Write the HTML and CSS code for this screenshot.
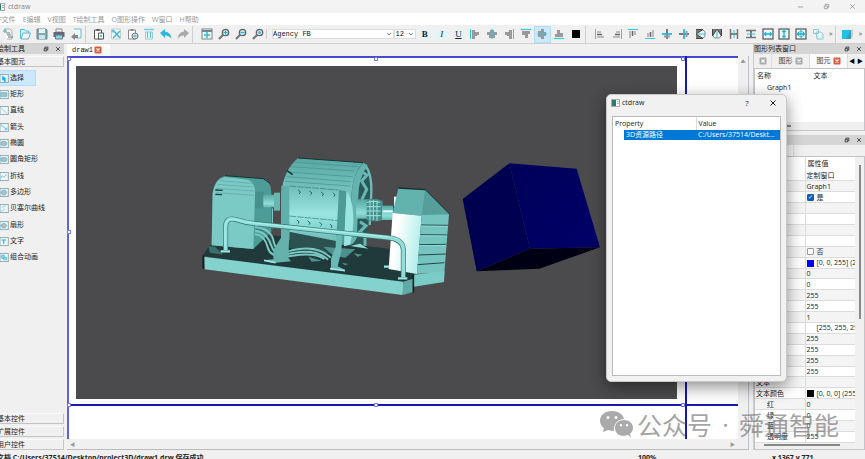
FILE: index.html
```html
<!DOCTYPE html>
<html>
<head>
<meta charset="utf-8">
<title>ctdraw</title>
<link rel="stylesheet" href="styles.css">
</head>
<body>
<svg class="defs" aria-hidden="true">
  <symbol id="float" viewBox="0 0 8 8"><path d="M2.5 3V1.5h4v3.500H5M1.500 3.500h3.500v3h-3.500z" fill="none" stroke="currentColor"/></symbol>
  <symbol id="close" viewBox="0 0 8 8"><path d="M1.500 1.500l5 5m0-5l-5 5" fill="none" stroke="currentColor"/></symbol>
  <symbol id="closebox" viewBox="0 0 8 8"><rect x=".5" y=".5" width="7" height="7" rx="1" fill="currentColor"/><path d="M2.500 2.500l3 3m0-3l-3 3" stroke="#fff" stroke-width="1.200"/></symbol>
  <symbol id="chev" viewBox="0 0 8 8"><path d="M2 3l2 2 2-2" fill="none" stroke="#888"/></symbol>
  <symbol id="app" viewBox="0 0 9 8"><rect x=".5" y=".5" width="8" height="7" fill="#fff" stroke="#aab"/><rect x="1" y="1" width="4" height="6" fill="#2f7a68"/><path d="M6 2.500h2M6 4.500h2" stroke="#9bc"/></symbol>
  <symbol id="al" viewBox="0 0 12 12"><path d="M1.500 1v10" stroke="#2ccbe6"/><path d="M3 2h3v2h4v3h-2v1h-2v3h-3z" fill="#999"/></symbol>
  <symbol id="at" viewBox="0 0 12 12"><path d="M1 1.500h10" stroke="#2ccbe6" stroke-width="1.200"/><path d="M2 3h8v3h-2v4h-3v-3h-3z" fill="#999"/></symbol>
  <symbol id="ac" viewBox="0 0 12 12"><path d="M4 2h4v2h3v3h-2v3h-6v-3h-2v-3h3z" fill="#999"/><path d="M6 1v10" stroke="#2ccbe6" stroke-width="1.200"/></symbol>
  <symbol id="el" viewBox="0 0 12 12"><path d="M1.500 1v10" stroke="#2ccbe6"/><path d="M3 4h4M3 9h7" stroke="#aaa" stroke-width="1.500"/><path d="M3 6.500h5" stroke="#666" stroke-width="1.500"/></symbol>
  <symbol id="ec" viewBox="0 0 12 12"><path d="M6 1v10" stroke="#777" stroke-width="2"/><path d="M3 8.500h6" stroke="#999" stroke-width="2"/><path d="M1 6h10" stroke="#26b8dd" stroke-width="1.800"/></symbol>
  <symbol id="flip" viewBox="0 0 12 12"><path d="M1 1.500h7L1 6l7 4.500H1" fill="#777" stroke="#444"/><path d="M8 2q3 1 2 4q1 3-2 4" fill="none" stroke="#888"/><path d="M3 6h7" stroke="#2ac3dc"/></symbol>
  <symbol id="sp" viewBox="0 0 12 12"><path d="M2.500 1v10M9.500 1v10" stroke="#777" stroke-width="1.500"/><path d="M3 6h6" stroke="#444" stroke-width="1.300"/><path d="M6 2v8" stroke="#2ac3dc"/></symbol>
  <symbol id="sz" viewBox="0 0 12 12"><rect x="1" y="1" width="10" height="10" fill="#e6fbff" stroke="#555" stroke-width="1.200"/><path d="M2.500 6h7M4 4.300L2.500 6 4 7.700M8 4.300L9.500 6 8 7.700" fill="none" stroke="#22acd7" stroke-width="1.300"/></symbol>
  <symbol id="mag" viewBox="0 0 12 12"><path d="M1 11l4-4" stroke="#777" stroke-width="2.200"/><circle cx="7.500" cy="4.500" r="3.200" fill="#bdeaf2" stroke="#666" stroke-width="1.300"/></symbol>
  <symbol id="box" viewBox="0 0 12 12"><rect x="0" y=".5" width="11" height="11" fill="#eef7fa" stroke="#7b97a5"/></symbol>
  <linearGradient id="teal" x2="0" y2="1"><stop offset="0" stop-color="#57a8a4"/><stop offset=".35" stop-color="#72c1bd"/><stop offset=".7" stop-color="#91dfda"/><stop offset="1" stop-color="#69b5b1"/></linearGradient>
  <linearGradient id="panel" x2="0" y2="1"><stop offset="0" stop-color="#6fbdb9"/><stop offset=".6" stop-color="#9ae5e1"/><stop offset="1" stop-color="#7fcfca"/></linearGradient>
  <linearGradient id="shine" x2="1" y2=".3"><stop offset=".3" stop-color="#fff"/><stop offset="1" stop-color="#b4efeb"/></linearGradient>
  <linearGradient id="face" x2="1" y2="1"><stop offset="0" stop-color="#00005a"/><stop offset="1" stop-color="#000068"/></linearGradient>
</svg>

<header class="titlebar">
  <svg class="appicon cut"><use href="#app"/></svg><span>ctdraw</span>
  <div class="winbtns">
    <button aria-label="Minimize"><svg viewBox="0 0 8 8"><path d="M1 4.500h6" stroke="currentColor"/></svg></button>
    <button aria-label="Restore"><svg><use href="#float"/></svg></button>
    <button aria-label="Close"><svg><use href="#close"/></svg></button>
  </div>
</header>
<nav class="menubar"><a href="#">F文件</a><a href="#">E编辑</a><a href="#">V视图</a><a href="#">T绘制工具</a><a href="#">O图形操作</a><a href="#">W窗口</a><a href="#">H帮助</a></nav>

<div class="toolbar">
  <div class="group g1">
    <button aria-label="New"><svg viewBox="0 0 12 12"><path d="M2 1h6l2 2v8H5" fill="#fff" stroke="#aaa"/><path d="M1 3h4M3 1v4" stroke="#4aa"/><path d="M4 5h4M5 7h4M6 9h5" stroke="#577"/></svg></button>
    <button aria-label="Open"><svg viewBox="0 0 12 12"><path d="M1.500 11V1.500h4l1 1.500h3v2" fill="#dff8fc" stroke="#46c6de"/><path d="M2 11l2-6h7.500l-2 6z" fill="#e9f7fa" stroke="#7ac"/></svg></button>
    <button aria-label="Save"><svg viewBox="0 0 12 12"><path d="M1 1h9l1 1v9H1z" fill="#8aa5ad" stroke="#6c858d"/><path d="M3 1h6v4H3z" fill="#e5f7f9"/><path d="M3 7h6v4H3z" fill="#bde9ef"/></svg></button>
    <button aria-label="Print"><svg viewBox="0 0 12 12"><path d="M3 1h6v3H3z" fill="#fff" stroke="#888"/><path d="M.500 4h11v5H.500z" fill="#667"/><path d="M2.500 7h7v4h-7z" fill="#85d6e2" stroke="#678"/></svg></button>
    <button aria-label="Export"><svg viewBox="0 0 12 12"><path d="M4 1h7v9H6" fill="#e8fbff" stroke="#79b7c3"/><path d="M1 9l4-4v2h3v3H5v2z" fill="#888"/></svg></button>
  </div>
  <div class="group g2">
    <button aria-label="Paste"><svg viewBox="0 0 12 12"><path d="M1.500 2h7v9h-7z" fill="#fff" stroke="#555"/><path d="M3.500 1h3v2h-3z" fill="#555"/><path d="M5.500 5h5v6h-5z" fill="#dff" stroke="#555"/><path d="M7 8h2" stroke="#555"/></svg></button>
    <button aria-label="Cut"><svg viewBox="0 0 12 12"><path d="M1.500 1h9v10h-9z" fill="#f3ffff" stroke="#ccc"/><path d="M3 2l7 8M10 3l-7 7" stroke="#3bb9d2" stroke-width="1.500"/><circle cx="3" cy="3" r="1.500" fill="#7bd"/></svg></button>
    <button aria-label="Copy"><svg viewBox="0 0 12 12"><path d="M1.500 2h7v9h-7z" fill="#fff" stroke="#888"/><path d="M3.500 1h3v2h-3z" fill="#888"/><circle cx="8" cy="8" r="3" fill="#bde9f0" stroke="#777"/><path d="M6.500 8h3" stroke="#777"/></svg></button>
    <button aria-label="Delete"><svg viewBox="0 0 12 12"><path d="M1 1.500h10" stroke="#6bd4e8" stroke-width="1.500"/><path d="M2.500 4h7v7h-7z" fill="#e5fbff" stroke="#9cc"/><path d="M4.500 4v6M7.500 4v6" stroke="#58c3dc"/></svg></button>
    <button aria-label="Undo"><svg viewBox="0 0 12 12"><path d="M0 5l5-4v2.500q6 .5 6.500 7.500-2-3.500-6.500-3.500V10z" fill="#30b7dd"/></svg></button>
    <button aria-label="Redo"><svg viewBox="0 0 12 12"><path d="M12 5L7 1v2.500Q1 4 .5 11 2.500 7.500 7 7.500V10z" fill="#aaa"/></svg></button>
  </div>
  <div class="group g3">
    <button aria-label="Fit"><svg viewBox="0 0 12 12"><rect x="1" y="1" width="10" height="10" fill="#e8f8fb" stroke="#788"/><path d="M1 3h10" stroke="#788" stroke-width="2"/><path d="M6 4v6M3 7h6" stroke="#3bb7ce" stroke-width="1.500"/></svg></button>
    <button aria-label="Zoom in"><svg viewBox="0 0 12 12"><use href="#mag"/><path d="M5.500 4.500h4m-2-2v4" stroke="#18b5d8"/></svg></button>
    <button aria-label="Zoom out"><svg viewBox="0 0 12 12"><use href="#mag"/><path d="M5.500 4.500h4" stroke="#18b5d8"/></svg></button>
    <button aria-label="Zoom reset"><svg viewBox="0 0 12 12"><use href="#mag"/><circle cx="7.500" cy="4.500" r="1.300" fill="#4ba9bc"/></svg></button>
  </div>
  <div class="fonts">
    <label class="combo wide"><select aria-label="Font"><option>Agency FB</option></select><svg><use href="#chev"/></svg></label>
    <label class="combo"><select aria-label="Size"><option>12</option></select><svg><use href="#chev"/></svg></label>
  </div>
  <div class="group g4">
    <button class="letter"><b>B</b></button><button class="letter"><i>I</i></button><button class="letter"><u>U</u></button>
    <button aria-label="Align left"><svg><use href="#al"/></svg></button>
    <button aria-label="Align centre"><svg><use href="#ac"/></svg></button>
    <button aria-label="Align right"><svg class="mirror"><use href="#al"/></svg></button>
    <button aria-label="Align top"><svg><use href="#at"/></svg></button>
    <button aria-label="Align middle" class="on"><svg class="r90"><use href="#ac"/></svg></button>
    <button aria-label="Align bottom"><svg class="r180"><use href="#at"/></svg></button>
    <button aria-label="Colour"><svg viewBox="0 0 12 12"><path d="M2 2h8v8H2z"/></svg></button>
  </div>
  <div class="group g5">
    <button aria-label="Left edges"><svg><use href="#el"/></svg></button>
    <button aria-label="Right edges"><svg class="mirror"><use href="#el"/></svg></button>
    <button aria-label="Top edges"><svg class="r90"><use href="#el"/></svg></button>
    <button aria-label="Bottom edges"><svg class="r270"><use href="#el"/></svg></button>
    <button aria-label="Middle line"><svg><use href="#ec"/></svg></button>
    <button aria-label="Centre line"><svg class="r270"><use href="#ec"/></svg></button>
    <button aria-label="Flip vertical"><svg><use href="#flip"/></svg></button>
    <button aria-label="Flip horizontal"><svg class="r90"><use href="#flip"/></svg></button>
    <button aria-label="Space across"><svg><use href="#sp"/></svg></button>
    <button aria-label="Space down"><svg class="r90"><use href="#sp"/></svg></button>
    <button aria-label="Same width"><svg><use href="#sz"/></svg></button>
    <button aria-label="Same height"><svg class="r90"><use href="#sz"/></svg></button>
    <button aria-label="Same size"><svg viewBox="0 0 12 12"><use href="#sz"/><path d="M6 2.500v7M4.500 4L6 2.500 7.500 4M4.500 8L6 9.500 7.500 8" fill="none" stroke="#22acd7"/></svg></button>
    <button aria-label="Group"><svg viewBox="0 0 12 12"><path d="M1.500 1.500h5v4h-5zM4 4h5l2 2v5H5z" fill="#ecfbfd" stroke="#8bc6d1"/></svg></button>
  </div>
  <button class="more">»</button>
  <div class="group g6"><button aria-label="Layer"><svg viewBox="0 0 12 12"><path d="M10 2l2-1v8l-3 2z" fill="#ccc"/><path d="M1 2h9v9H1z" fill="#20c2e8"/><path d="M10 2v9H5z" fill="#389eb8"/></svg></button></div>
  <button class="more">»</button>
</div>

<main class="workspace">
  <aside class="left">
    <div class="docktitle"><span class="clipped">绘制工具</span><button aria-label="Float"><svg><use href="#float"/></svg></button><button aria-label="Close"><svg><use href="#close"/></svg></button></div>
    <button class="section">基本图元</button>
    <div class="tools">
      <button class="on"><svg viewBox="0 0 12 12"><use href="#box"/><path d="M3 2v7l2-1 1 3 2-1-1-3h2z" fill="#0bb5e9"/></svg>选择</button>
      <button><svg viewBox="0 0 12 12"><use href="#box"/><path d="M1 3.500h8v5H1z" fill="#bbb" stroke="#45b9dc"/></svg>矩形</button>
      <button><svg viewBox="0 0 12 12"><use href="#box"/><path d="M1 2l8 8" stroke="#73c4df"/></svg>直线</button>
      <button><svg viewBox="0 0 12 12"><use href="#box"/><path d="M1 2l7 6M9 6v3H6" fill="none" stroke="#37afd5"/></svg>箭头</button>
      <button><svg viewBox="0 0 12 12"><use href="#box"/><ellipse cx="5" cy="6" rx="4" ry="3" fill="#bbb" stroke="#45b9dc"/></svg>椭圆</button>
      <button><svg viewBox="0 0 12 12"><use href="#box"/><rect x="1" y="3.500" width="8" height="5" rx="1.500" fill="#bbb" stroke="#45b9dc"/></svg>圆角矩形</button>
      <button><svg viewBox="0 0 12 12"><use href="#box"/><path d="M1 8l2-3 2 2 4-4" fill="none" stroke="#45b9dc"/></svg>折线</button>
      <button><svg viewBox="0 0 12 12"><use href="#box"/><path d="M3 3h4l2 3-2 3H3L1 6z" fill="#bbb" stroke="#45b9dc"/></svg>多边形</button>
      <button><svg viewBox="0 0 12 12"><use href="#box"/><path d="M8 3H4q-2 2 1 3t-1 3H1" fill="none" stroke="#7bd0e6"/></svg>贝塞尔曲线</button>
      <button><svg viewBox="0 0 12 12"><use href="#box"/><path d="M1 6q4-6 8 0l-2 3H3z" fill="#bbb" stroke="#45b9dc"/></svg>扇形</button>
      <button><svg viewBox="0 0 12 12"><use href="#box"/><path d="M2 4h6M5 4v5" stroke="#24acd9" stroke-width="1.500"/></svg>文字</button>
      <button><svg viewBox="0 0 12 12"><use href="#box"/><circle cx="4" cy="5" r="2.500" fill="#86d3e9" stroke="#45b9dc"/><path d="M5 6h4v3H5z" fill="#ccc" stroke="#45b9dc"/></svg>组合动画</button>
    </div>
    <button class="section">基本控件</button>
    <button class="section">扩展控件</button>
    <button class="section">用户控件</button>
  </aside>

  <section class="center">
    <div class="tabs"><div class="doctab">draw1<button aria-label="Close draw1" class="red"><svg><use href="#closebox"/></svg></button></div></div>
    <div class="view">
      <svg class="canvas">
        <rect width="100%" height="100%" fill="#fff"/>
        <rect x="9" y="10" width="601" height="333" fill="#4b4b4d"/>
        <path d="M0 1h672" stroke="#4747cf" stroke-width="2"/><path d="M1 0v384" stroke="#6161de" stroke-width="2"/>
        <path d="M0 349h672M619 0v384" stroke="#1818b4" stroke-width="2"/>
        <g fill="#fff" stroke="#7474e8"><path d="M.500 1.500h3v3h-3zM307.500 1.500h3v3h-3zM614.500 1.500h3v3h-3zM.500 174.500h3v3h-3zM.500 347.500h3v3h-3zM307.500 347.500h3v3h-3zM614.500 347.500h3v3h-3z"/></g>
        <svg x="123" y="84" width="270" height="170" viewBox="0 0 810 510">
          <path d="M38 348L58 316l190-30 350 40v62l74 10-4 30-28 4z" fill="#203a3b"/>
          <path d="M55 318l20 2 25 24-40-6z" fill="#3b6e6c"/>
          <path d="M42 350l598 75-2 40L44 388z" fill="#84d2cd"/><path d="M640 425l29-9v40l-31 9z" fill="#61aaa7"/><path d="M40 346v40" stroke="#122" stroke-width="6"/>
          <path d="M65 316l3-156q6-48 40-53l107 8q28 5 29 40v120l-54 52z" fill="#4d9c98"/>
          <path d="M65 316l3-156q6-42 36-49l70 8q22 10 21 40l-5 168z" fill="#7bcac6"/>
          <path d="M90 122l95 8M82 133l108 8M77 145l115 8M77 158l115 8" stroke="#5aa39f" stroke-width="2"/><path d="M76 150l22 1M76 163l20 1" stroke="#163c3b" stroke-width="4"/><path d="M105 107l115 9 20 14" stroke="#173435" stroke-width="3" fill="none"/>
          <path d="M195 155h28v50h-28z" fill="#468f8b"/><path d="M220 164h44v38h-44z" fill="url(#teal)"/><path d="M252 158h18v54h-18z" fill="#68b6b1"/><path d="M247 205v60" stroke="#8edbd6" stroke-width="3"/>
          <path d="M492 90q26-25 50 5 8 90-6 160l-20 65-28-10z" fill="#2b5757"/><path d="M526 75q20 30 18 80l-5 100" fill="none" stroke="#70bcb8" stroke-width="7"/>
          <path d="M515 95l16 10-16 18 15 25-15 32M510 245l18 12-18 18 15 12v30" fill="none" stroke="#68b8b3" stroke-width="9"/>
          <path d="M274 160q6-68 50-106l195 14q-30 30-35 100l-5 148-205-18z" fill="url(#teal)"/>
          <path d="M484 168q5-72 37-100l12 9q-28 35-28 95l-4 120q-8 20-22 24z" fill="#64b3ae"/>
          <path d="M324 54l195 14" stroke="#183736" stroke-width="3"/>
          <path d="M315 67l190 13M304 80l190 13M295 96l193 14M290 110l192 15M286 124l194 14" stroke="#478e8b" stroke-width="2"/><path d="M291 92l17 12" stroke="#122f2e" stroke-width="4"/>
          <path d="M298 138l148 12-4 130-145-22z" fill="url(#panel)"/><path d="M298 138l148 12M298 228l146 14" stroke="#397876" stroke-width="2" stroke-dasharray="20 3"/>
          <path d="M324 150q12 6 3 12M358 153q12 6 3 12M393 156q12 6 3 12M429 158q10 6 3 12M320 240q12 6 3 12M353 243q12 6 3 12M388 247q12 6 3 12M420 252q10 6 3 12" fill="none" stroke="#214f4e" stroke-width="2.500"/>
          <path d="M274 137l24 2v165l-25-3z" fill="#5fafab"/><path d="M447 150l23 4-8 160-24-5z" fill="#4d9b97"/><path d="M470 152q35 60 10 162l-18 5z" fill="#9ae5e0"/>
          <path d="M298 275l140 28v40l-140-18z" fill="#2b5151"/>
          <path d="M195 262q48 2 56 43t55 26q76-18 116 22M195 272q36 4 48 43t63 24q74-14 108 20M195 282q30 4 38 40t74 25q68-10 96 10" fill="none" stroke="#7cc9c4" stroke-width="6"/><path d="M197 267q42 4 50 43t57 25q76-16 112 20" fill="none" stroke="#326966" stroke-width="2"/>
          <path d="M400 320l36 3 60 5-30 25-35-5zM355 350l40 12-30 3zM455 368l20 4-10 4zM490 340l28 4-15 6z" fill="#4d918d"/><path d="M480 318l55 8-25-15z" fill="#8cdbd6"/>
          <path d="M275 255l24 4-4 95 8 10-53 5-28-8 28-3V330l24-38z" fill="#65b2ad"/><path d="M438 270l20 4-4 60-11 45 22 10-42 2v-35l14-35z" fill="#69b8b3"/><path d="M222 361l35 7M420 386l45 6" stroke="#9de7e2" stroke-width="5"/>
          <path d="M498 178h42v58h-42z" fill="url(#teal)"/><path d="M530 178q25-5 48 5v57q-20 8-48 0z" fill="#488d89"/><path d="M530 187q20-6 40 0M530 200h42M530 213h42M530 227h42M540 180v60M550 180v60M561 182v60" stroke="#9be6e1" stroke-width="3" fill="none"/><path d="M576 197h33v43h-33z" fill="url(#teal)"/><path d="M578 214h30" stroke="#d8fffc" stroke-width="6"/>
          <path d="M612 170h12v50h-12z" fill="#e6ffff"/><path d="M608 219l17-75 80 5 73 74-83 4z" fill="#62b2ad"/><path d="M625 144l80 5 73 74" fill="none" stroke="#172f30" stroke-width="4"/><path d="M705 149l73 74-83 4z" fill="#559e9a"/>
          <path d="M608 219l87 8-14 175-85-15z" fill="url(#shine)"/>
          <path d="M695 225l82-2-14 175-82 3z" fill="#76c4bf"/><path d="M693 255l82 1M691 284l81 1M688 314l81-1M686 345l81-3M683 374l80-6" stroke="#234746" stroke-width="3"/><path d="M693 258l81 1M691 287l80 1M688 317l80-1" stroke="#a0e8e3" stroke-width="2"/>
          <path d="M672 404l92-10-2 32-90 14z" fill="#7accc7"/><path d="M670 404v54" stroke="#0e2526" stroke-width="5"/>
          <path d="M107 330V260q0-29 29-22 35 12 72 14l387 41q43 4 45 35v84" fill="none" stroke="#397572" stroke-width="15"/><path d="M107 330V260q0-29 29-22 35 12 72 14l387 41q43 4 45 35v84" fill="none" stroke="#91ddd8" stroke-width="11"/><path d="M105 325v-65q0-26 29-22 35 12 72 12l389 41" fill="none" stroke="#bafaf4" stroke-width="2"/>
          <path d="M92 334h28M624 415h28M582 380h16" stroke="#9ce7e2" stroke-width="7"/>
        </svg>
        <svg x="383" y="94" width="160" height="130" viewBox="0 0 480 390">
          <path d="M38 147L178 40l62 256L80 364z" fill="#000050"/><path d="M178 40l202 16 70 236-210 4z" fill="url(#face)"/><path d="M240 296l210-4-182 64-188 8z" fill="#000015"/>
        </svg>
      </svg>
      <div class="vscroll"><span>▲</span></div>
      <div class="hscroll"><span>◀</span><span>▶</span></div>
    </div>
  </section>

  <aside class="right">
    <div class="docktitle"><span>图形列表窗口</span><button aria-label="Float"><svg><use href="#float"/></svg></button><button aria-label="Close"><svg><use href="#close"/></svg></button></div>
    <div class="listtabs">
      <span class="stub"><svg><use href="#closebox"/></svg></span>
      <span>图形 <svg><use href="#closebox"/></svg></span>
      <span class="active">图元 <svg class="redicon"><use href="#closebox"/></svg></span>
      <button>◀</button><button>▶</button>
    </div>
    <div class="graphs">
      <table><tr><th>名称</th><th>文本</th></tr><tr><td class="child">Graph1</td><td></td></tr></table>
      <div class="thumb"></div>
    </div>
    <div class="docktitle second"><span></span><button aria-label="Float"><svg><use href="#float"/></svg></button><button aria-label="Close"><svg><use href="#close"/></svg></button></div>
    <div class="subtab"><span></span></div>
    <div class="props">
      <div class="proprows">
      <table>
        <tr class="head"><th></th><th>属性值</th></tr>
        <tr><td></td><td>定制窗口</td></tr>
        <tr><td></td><td>Graph1</td></tr>
        <tr><td></td><td><label><input type="checkbox" checked>是</label></td></tr>
        <tr><td></td><td></td></tr>
        <tr><td></td><td></td></tr>
        <tr><td></td><td></td></tr>
        <tr><td></td><td></td></tr>
        <tr><td></td><td><label><input type="checkbox">否</label></td></tr>
        <tr><td></td><td><i class="swatch blue"></i>[0, 0, 255] (255)</td></tr>
        <tr><td></td><td>0</td></tr>
        <tr><td></td><td>0</td></tr>
        <tr><td></td><td>255</td></tr>
        <tr><td></td><td>255</td></tr>
        <tr><td></td><td>1</td></tr>
        <tr><td></td><td><i class="swatch white"></i>[255, 255, 255]</td></tr>
        <tr><td></td><td>255</td></tr>
        <tr><td></td><td>255</td></tr>
        <tr><td></td><td>255</td></tr>
        <tr><td></td><td>255</td></tr>
        <tr><td>文本</td><td></td></tr>
        <tr><td>文本颜色</td><td><i class="swatch"></i>[0, 0, 0] (255)</td></tr>
        <tr><td class="child">红</td><td>0</td></tr>
        <tr><td class="child">绿</td><td>0</td></tr>
        <tr><td class="child">蓝</td><td>0</td></tr>
        <tr><td class="child">透明度</td><td>255</td></tr>
      </table>
      </div>
      <div class="vthumb"></div>
      <div class="hthumb"></div>
    </div>
  </aside>
</main>
<footer class="status"><span class="path">文档 C:/Users/37514/Desktop/project3D/draw1.drw 保存成功</span><span class="zoom">100%</span><span class="pos">x 1367 y 771</span></footer>

<div class="dialog" role="dialog" aria-label="ctdraw">
  <div class="dlgtitle"><svg class="appicon"><use href="#app"/></svg><span>ctdraw</span><button>?</button><button aria-label="Close"><svg><use href="#close"/></svg></button></div>
  <div class="dlgbody">
    <table><tr><th colspan="2">Property</th><th>Value</th></tr><tr><td class="gutter"></td><td class="sel">3D资源路径</td><td class="sel val">C:/Users/37514/Deskt...</td></tr></table>
  </div>
</div>

<div class="watermark">
  <svg viewBox="0 0 33 28"><path fill-rule="evenodd" d="M12 1C5 1 0 5 0 11c0 3 2 6 4 7l-1 4 5-2q3 1 6 1c-1-7 4-12 10-12C23 4 18 1 12 1zM8 6a1.500 1.500 0 1 1 0 3 1.500 1.500 0 0 1 0-3zM16 6a1.500 1.500 0 1 1 0 3 1.500 1.500 0 0 1 0-3zM24 10c-5 0-9 3-9 8s4 8 9 8l4-1 3 2-1-3c2-2 3-4 3-6 0-5-4-8-9-8zM21 14a1.200 1.200 0 1 1 0 2.500 1.200 1.200 0 0 1 0-2.500zM27 14a1.200 1.200 0 1 1 0 2.500 1.200 1.200 0 0 1 0-2.500z"/></svg>
  <span>公众号</span><span class="dot">·</span><span>舜通智能</span>
</div>
</body>
</html>
```
FILE: styles.css
```css
* { box-sizing: border-box; }
body {
  margin: 0; height: 100vh; display: flex; flex-direction: column; overflow: hidden; position: relative;
  background: #f0f0f0; color: #222; font: 7px/10px "Open Sans", "Noto Sans CJK SC", sans-serif;
}
button { font: inherit; color: inherit; border: 0; background: none; padding: 0; display: flex; align-items: center; justify-content: center; }
table { border-collapse: collapse; table-layout: fixed; width: 100%; }
th, td { font-weight: 400; text-align: left; padding: 0; white-space: nowrap; overflow: hidden; }
.defs { position: absolute; width: 0; height: 0; }

.titlebar { display: flex; align-items: center; height: 13px; flex: none; background: #f3f3f3; color: #888; }
.appicon { width: 9px; height: 8px; margin-right: 3px; }
.appicon.cut { margin-left: -4px; }
.winbtns { display: flex; margin-left: auto; color: #999; }
.winbtns button { width: 26px; }
.winbtns svg { width: 7px; height: 7px; }

.menubar { display: flex; gap: 7px; align-items: center; height: 12px; flex: none; background: #fff; padding-top: 1px; text-indent: 0; margin-left: -2px; }
.menubar a { color: #999; text-decoration: none; white-space: nowrap; }

.toolbar { display: flex; align-items: center; height: 19px; flex: none; border-bottom: 1px solid #d0d0d0; }
.group { display: flex; height: 17px; flex: none; }
.group button { flex: 1 1 16px; min-width: 0; }
.group svg { width: 12px; height: 12px; flex: none; }
.group button.on { background: #cce8ff; outline: 1px solid #b4dcfb; outline-offset: -1px; }
.group button.letter { font: 9px/10px "Liberation Serif", serif; color: #222; background: #e0f5fa content-box; padding: 4px 3px; }
.g1 { width: 84px; }
.g2 { width: 106px; }
.g3 { width: 74px; }
.g5 { width: 241px; }
.g2, .g3, .g5 { border-left: 1px solid #cfcfcf; padding-left: 5px; margin-left: 1px; }
.g4 { width: 168px; }
.g6 { width: 21px; border-left: 1px solid #cfcfcf; padding-left: 2px; }
.fonts { display: flex; width: 154px; height: 10px; border-left: 1px solid #cfcfcf; padding-left: 5px; }
.combo { display: flex; align-items: center; background: #fff; border: 1px solid #ddd; width: 22px; height: 10px; overflow: hidden; }
.combo.wide { flex: 1; }
.combo select { appearance: none; border: 0; background: none; padding: 0; min-width: 0; flex: 1; font: 7px/8px "Liberation Mono", monospace; color: #111; }
.combo svg { width: 8px; height: 8px; flex: none; }
.more { width: 9px; color: #555; }
.mirror { transform: scaleX(-1); }
.r90 { transform: rotate(90deg); }
.r180 { transform: rotate(180deg); }
.r270 { transform: rotate(270deg); }

.workspace { flex: 1; min-height: 0; display: grid; grid-template-columns: 64px minmax(0, 1fr) 112px; grid-template-rows: minmax(0, 1fr); }
.left { display: flex; flex-direction: column; gap: 2px; min-width: 0; overflow: hidden; }
.docktitle { display: flex; align-items: center; height: 10px; flex: none; background: #d5d5d5; gap: 5px; padding-right: 3px; }
.docktitle span { flex: 1; white-space: nowrap; }
.docktitle button { width: 7px; }
.docktitle svg { width: 6px; height: 6px; }
.clipped, .section { text-indent: -3px; }
.section { justify-content: flex-start; height: 11px; flex: none; border: 1px solid #c4c4c4; border-width: 0 1px 1px 0; border-top: 1px solid #fafafa; }
.tools { flex: 1; display: flex; flex-direction: column; padding-top: 1px; }
.tools button { height: 16px; justify-content: flex-start; gap: 1px; width: 36px; white-space: nowrap; }
.tools button:nth-child(3n) { margin-bottom: 1px; }
.tools button.on { background: #cce8ff; border: 1px solid #b5dcfa; border-left: 0; }
.tools svg { width: 9px; height: 11px; flex: none; }

.center { display: flex; flex-direction: column; padding: 0 4px 0 3px; min-width: 0; }
.tabs { height: 12px; flex: none; display: flex; }
.doctab { display: flex; align-items: center; gap: 1px; background: #fbfbfb; padding: 0 8px 0 5px; font: 7px/10px "Liberation Mono", monospace; }
.red, .redicon { color: #dc5b3c; }
.doctab svg { width: 8px; height: 8px; }
.view { flex: 1; min-height: 0; display: grid; grid-template: minmax(0, 1fr) 10px / minmax(0, 1fr) 10px; border-right: 1px solid #c0c0c8; border-bottom: 1px solid #bbb; }
.canvas { width: 100%; height: 100%; display: block; }
.vscroll, .hscroll { background: #f0f0f0; color: #999; font-size: 5px; line-height: 10px; }
.vscroll { text-align: center; }
.hscroll { display: flex; justify-content: space-between; padding: 0 3px; }

.right { display: flex; flex-direction: column; min-width: 0; border-left: 1px solid #ccc; }
.listtabs { display: flex; height: 14px; flex: none; align-items: stretch; }
.listtabs span { display: flex; align-items: center; justify-content: center; gap: 2px; width: 38px; border-right: 1px solid #ddd; color: #444; }
.listtabs .stub { width: 18px; }
.listtabs span.active { background: #fbfbfb; }
.listtabs svg { width: 8px; height: 8px; color: #aaa; }
.listtabs svg.redicon { color: #dc5b3c; }
.listtabs button { width: 8px; font-size: 6px; color: #000; }
.graphs { height: 63px; flex: none; background: #fff; border: 1px solid #c4c4c8; display: flex; flex-direction: column; padding-top: 1px; }
.graphs th, .graphs td { height: 12px; padding-left: 2px; }
.graphs th + th { padding-left: 4px; }
.graphs td.child { padding-left: 12px; }
.thumb { margin-top: auto; height: 8px; background: #f0f0f0; }
.thumb::before { content: ""; display: block; width: 36px; height: 2px; margin-top: 3px; background: #888; }
.docktitle.second { margin-top: 4px; }
.subtab { height: 11px; flex: none; display: flex; }
.subtab span { width: 40px; border-right: 1px solid #ddd; background: #f7f7f7; }
.props { flex: 1; min-height: 0; display: grid; grid-template: 286px 1fr / minmax(0, 1fr) 9px; border: 1px solid #c4c4c8; }
.proprows { overflow: hidden; background: #fff; }
.props table { height: 286px; }
.props th, .props td { border-bottom: 1px solid #dcdcdc; height: 10px; line-height: 9px; padding-left: 1px; }
.props th:first-child, .props td:first-child { border-right: 1px solid #dcdcdc; }
.props tr:nth-child(odd) { background: #f4f4f4; }
.props tr.head { background: #fff; }
.props .head th { height: 12px; border-bottom: 0; padding-left: 2px; }
.props td.child { padding-left: 12px; }
.props label { display: flex; align-items: center; gap: 3px; height: 9px; }
.props input { appearance: none; margin: 0; width: 7px; height: 7px; border: 1px solid #999; border-radius: 1px; background: #fff; }
.props input:checked { background: #0c5cb8; border-color: #0c5cb8; }
.props input:checked::after { content: "✓"; display: block; color: #fff; font-size: 6px; line-height: 5px; }
.swatch { display: inline-block; width: 7px; height: 7px; margin-right: 3px; background: #000; vertical-align: middle; }
.swatch.blue { background: #00f; }
.swatch.white { background: #fff; }
.vthumb { width: 2px; height: 154px; margin: 8px 0 0 4px; background: #888; }
.hthumb { width: 76px; height: 2px; margin: 1px 0 0 9px; background: #888; }

.status { display: flex; height: 9px; flex: none; padding-top: 3px; font-weight: 700; line-height: 10px; overflow: hidden; color: #222; }
.status span { white-space: nowrap; }
.path { flex: 1; margin-left: -3px; }
.zoom { width: 134px; }
.pos { width: 93px; }

.dialog { position: absolute; right: 78px; top: 94px; width: 181px; height: 288px; display: flex; flex-direction: column; background: #f1f1f1; border: 1px solid #c8c8c8; border-radius: 5px; padding: 0 5px 5px; box-shadow: 0 5px 16px rgba(0, 0, 0, .45); }
.dlgtitle { display: flex; align-items: center; height: 15px; margin-bottom: 6px; }
.dlgtitle span { flex: 1; }
.dlgtitle .appicon { margin-right: 2px; margin-left: -1px; }
.dlgtitle button { width: 26px; height: 14px; font-size: 8px; color: #222; }
.dlgtitle button:last-child { margin-right: -5px; }
.dlgtitle svg:not(.appicon) { width: 8px; height: 8px; }
.dlgbody { flex: 1; background: #fff; border: 1px solid #bbb; }
.dlgbody th { height: 13px; padding-left: 2px; }
.dlgbody th:last-child { border-left: 1px solid #ddd; }
.dlgbody td { height: 10px; line-height: 10px; }
.dlgbody td.gutter { width: 11px; }
.dlgbody td.sel { background: #0078d7; color: #fff; padding-left: 2px; }
.dlgbody table { table-layout: auto; }
.dlgbody td.val, .dlgbody th:last-child { width: 84px; }

.watermark { position: absolute; right: 26px; bottom: 18px; display: flex; align-items: center; color: rgba(110, 110, 110, .65); font: 25px/34px "Noto Sans CJK SC", sans-serif; white-space: nowrap; pointer-events: none; }
.watermark svg { width: 33px; height: 28px; fill: #aaa; margin-right: 4px; }
.watermark .dot { width: 27px; text-align: center; font-family: "Open Sans", sans-serif; }
```
